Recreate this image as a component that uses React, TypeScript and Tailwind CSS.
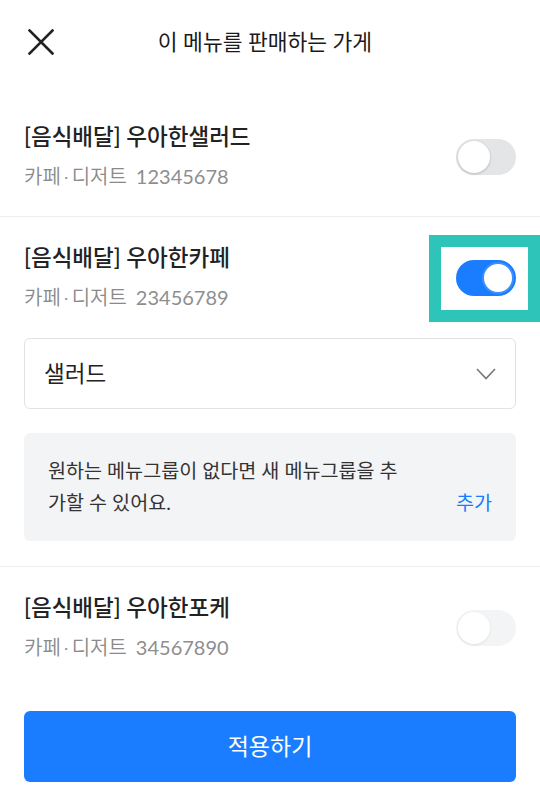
import React from "react";

const font = { fontFamily: "Lato, 'Noto Sans CJK KR', sans-serif" };

function Toggle({ state }: { state: "on" | "off" | "disabled" }) {
  if (state === "on") {
    return (
      <div className="relative h-[36px] w-[60px] rounded-full bg-[#1a7dff]">
        <div className="absolute right-[2px] top-[2px] h-[32px] w-[32px] rounded-full border-2 border-[#3d8fff] bg-white" />
      </div>
    );
  }
  const disabled = state === "disabled";
  return (
    <div className={`relative h-[36px] w-[60px] rounded-full ${disabled ? "bg-[#f3f4f5]" : "bg-[#e4e5e7]"}`}>
      <div
        className={`absolute left-[2px] top-[2px] h-[32px] w-[32px] rounded-full bg-white ${
          disabled ? "shadow-[0_1px_3px_rgba(0,0,0,0.08)]" : "shadow-[0_1px_3px_rgba(0,0,0,0.2)]"
        }`}
      />
    </div>
  );
}

function StoreRow({ name, num, state }: { name: string; num: string; state: "on" | "off" | "disabled" }) {
  return (
    <div className="flex items-center justify-between px-6">
      <div className="flex flex-col gap-[9px]">
        <div className="text-[22.5px] font-medium leading-[30px] text-[#222]">{name}</div>
        <div className="flex items-center text-[20px] font-[350] leading-[30px] text-[#8a8a8a]">
          <span>카페</span>
          <span className="mx-[3px]">·</span>
          <span>디저트</span>
          <span className="ml-[9px] font-normal text-[#8e8e8e]">{num}</span>
        </div>
      </div>
      {state === "on" ? (
        <div className="relative">
          <div className="absolute left-[-27px] top-[-25px] h-[87px] w-[111px] border-[12px] border-[#2ec4b9]" />
          <Toggle state="on" />
        </div>
      ) : (
        <Toggle state={state} />
      )}
    </div>
  );
}

export default function App() {
  return (
    <div className="flex min-h-[807px] w-[540px] flex-col bg-white" style={font}>
      <div className="relative flex h-[84px] items-center justify-center pr-[10px]">
        <svg className="absolute left-[28px] top-[29px]" width="26" height="26" viewBox="0 0 26 26">
          <path d="M1.5 1.5 L24.5 24.5 M24.5 1.5 L1.5 24.5" stroke="#222" strokeWidth="2.6" strokeLinecap="square" />
        </svg>
        <div className="text-[21.5px] text-[#1a1a1a]">이 메뉴를 판매하는 가게</div>
      </div>

      <div className="pt-[38px] pb-[25px]">
        <StoreRow name="[음식배달] 우아한샐러드" num="12345678" state="off" />
      </div>
      <div className="h-px bg-[#eeeeee]" />

      <div className="pt-[26px] pb-[25px]">
        <StoreRow name="[음식배달] 우아한카페" num="23456789" state="on" />
        <div className="mt-[26px] px-6">
          <div className="flex h-[71px] items-center justify-between rounded-[6px] border border-[#e2e2e2] pl-[19px] pr-[19px]">
            <span className="text-[22.5px] text-[#222]">샐러드</span>
            <svg width="20" height="12" viewBox="0 0 20 12">
              <path d="M1 1 L10 10.5 L19 1" fill="none" stroke="#777" strokeWidth="1.6" />
            </svg>
          </div>
          <div className="mt-[24px] flex items-end justify-between rounded-[6px] bg-[#f3f4f6] pl-6 pr-6 pt-[22px] pb-[22px]">
            <div className="max-w-[358px] text-[19.6px] leading-[32px] text-[#333]">
              원하는 메뉴그룹이 없다면 새 메뉴그룹을 추가할 수 있어요.
            </div>
            <div className="text-[19.6px] leading-[32px] text-[#1a7dff]">추가</div>
          </div>
        </div>
      </div>
      <div className="h-px bg-[#eeeeee]" />

      <div className="pt-[26px]">
        <StoreRow name="[음식배달] 우아한포케" num="34567890" state="disabled" />
      </div>

      <div className="mt-[49px] px-6">
        <button className="flex h-[71px] w-full items-center justify-center rounded-[6px] bg-[#1a7dff] text-[23px] text-white">
          적용하기
        </button>
      </div>
    </div>
  );
}
